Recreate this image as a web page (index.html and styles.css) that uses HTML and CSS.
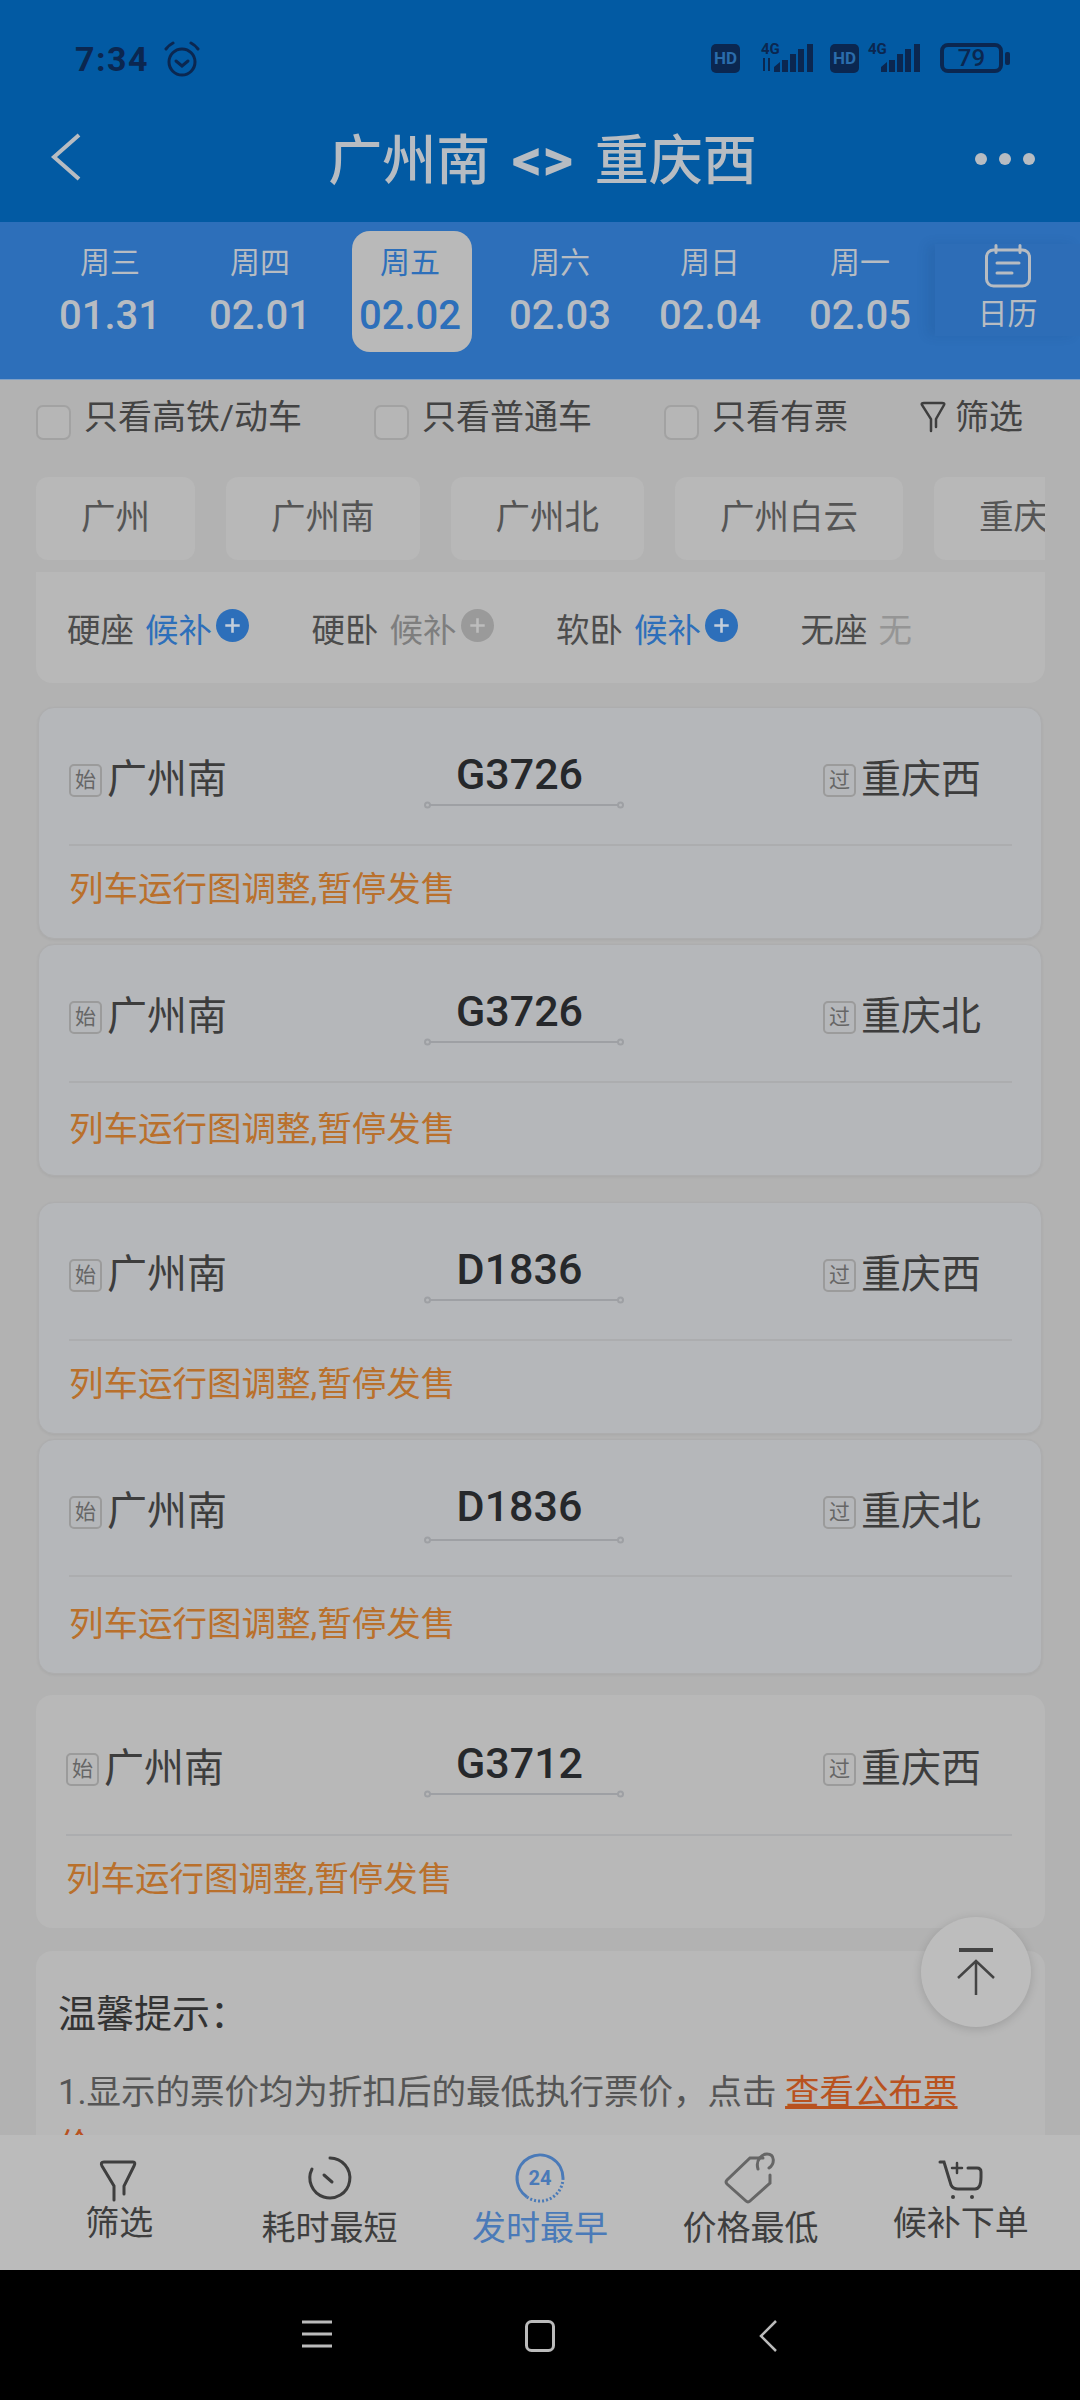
FILE: index.html
```html
<!DOCTYPE html>
<html lang="zh-CN">
<head>
    <meta charset="UTF-8">
    <meta name="viewport" content="width=device-width, initial-scale=1.0">
    <title>广州南 - 重庆西</title>
    <link rel="stylesheet" href="styles.css">
</head>
<body>
<div class="page">
    <header class="header">
        <div class="status">
            <span class="status-time">7:34</span>
            <svg class="status-alarm" width="38" height="36" viewBox="0 0 38 36" fill="none" stroke="#0b2750" stroke-width="3" stroke-linecap="round">
                <circle cx="19" cy="21" r="13"/>
                <path d="M13 20l6 5 6-5"/>
                <path d="M3 8q3-4 7-6M35 8q-3-4-7-6"/>
            </svg>
            <div class="status-right">
                <span class="hd">HD</span>
                <svg class="sig" width="60" height="32" viewBox="0 0 60 32" fill="#0b2750">
                    <text x="5" y="12" font-family="Roboto" font-size="15" font-weight="700">4G</text>
                    <path d="M7 16h2v13H7zM12 16h2v13h-2z"/>
                    <path d="M18 25l6-5v10h-6zM26 18h6v12h-6zM34 12h6v18h-6zM42 7h6v23h-6zM51 2h6v28h-6z"/>
                </svg>
                <span class="hd hd-second">HD</span>
                <svg class="sig sig-second" width="60" height="32" viewBox="0 0 60 32" fill="#0b2750">
                    <text x="3" y="12" font-family="Roboto" font-size="15" font-weight="700">4G</text>
                    <path d="M16 25l6-5v10h-6zM24 18h6v12h-6zM32 12h6v18h-6zM40 7h6v23h-6zM49 2h6v28h-6z"/>
                </svg>
                <span class="battery">79</span>
                <span class="battery-nub"></span>
            </div>
        </div>
        <div class="titlebar">
            <svg class="back" width="32" height="48" viewBox="0 0 32 48" fill="none" stroke="#b7bcc2" stroke-width="4">
                <path d="M29 2L4 24l25 22"/>
            </svg>
            <h1 class="title">广州南 <b>&lt;&gt;</b> 重庆西</h1>
            <div class="dots"><i></i><i></i><i></i></div>
        </div>
    </header>

    <nav class="dates">
        <div class="day"><span class="day-week">周三</span><span class="day-date">01.31</span></div>
        <div class="day"><span class="day-week">周四</span><span class="day-date">02.01</span></div>
        <div class="day day-active"><span class="day-week">周五</span><span class="day-date">02.02</span></div>
        <div class="day"><span class="day-week">周六</span><span class="day-date">02.03</span></div>
        <div class="day"><span class="day-week">周日</span><span class="day-date">02.04</span></div>
        <div class="day"><span class="day-week">周一</span><span class="day-date">02.05</span></div>
        <div class="calendar">
            <svg width="46" height="44" viewBox="0 0 46 44" fill="none" stroke="#b7bcc2" stroke-width="3" stroke-linecap="round">
                <rect x="1.500" y="6" width="43" height="36" rx="7"/>
                <path d="M11 1.500v7M35 1.500v7M12 19h22M12 29h15"/>
            </svg>
            <span>日历</span>
        </div>
    </nav>

    <main class="content">
        <div class="filters">
            <label class="check"><i class="box"></i>只看高铁/动车</label>
            <label class="check"><i class="box"></i>只看普通车</label>
            <label class="check"><i class="box"></i>只看有票</label>
            <div class="filter-link">
                <svg width="26" height="32" viewBox="0 0 26 32" fill="none" stroke="#3e3e3e" stroke-width="2.500" stroke-linecap="round">
                    <path d="M11 30V18L2 4q-1-2 2-2h18q3 0 2 2l-8 14v8"/>
                </svg>
                筛选
            </div>
        </div>

        <div class="chips">
            <span class="chip">广州</span>
            <span class="chip">广州南</span>
            <span class="chip">广州北</span>
            <span class="chip">广州白云</span>
            <span class="chip">重庆</span>
        </div>

        <div class="seats">
            <div class="seat">硬座<span class="seat-state blue">候补</span>
                <svg class="plus" width="33" height="33" viewBox="0 0 32 32"><circle cx="16" cy="16" r="16" fill="#2d6fba"/><path d="M16 9v14M9 16h14" stroke="#c3cedb" stroke-width="2.500"/></svg>
            </div>
            <div class="seat">硬卧<span class="seat-state">候补</span>
                <svg class="plus" width="33" height="33" viewBox="0 0 32 32"><circle cx="16" cy="16" r="16" fill="#9a9a9a"/><path d="M16 9v14M9 16h14" stroke="#bdbdbd" stroke-width="2.500"/></svg>
            </div>
            <div class="seat">软卧<span class="seat-state blue">候补</span>
                <svg class="plus" width="33" height="33" viewBox="0 0 32 32"><circle cx="16" cy="16" r="16" fill="#2d6fba"/><path d="M16 9v14M9 16h14" stroke="#c3cedb" stroke-width="2.500"/></svg>
            </div>
            <div class="seat">无座<span class="seat-state pale">无</span></div>
        </div>

        <section class="card">
            <div class="card-row">
                <div class="from"><span class="tag">始</span>广州南</div>
                <div class="train">G3726
                    <svg width="200" height="10" viewBox="0 0 200 10" fill="none" stroke="#9ea0a4" stroke-width="2"><path d="M5 5h190"/><circle cx="3.500" cy="5" r="2.500"/><circle cx="196.500" cy="5" r="2.500"/></svg>
                </div>
                <div class="to"><span class="tag">过</span>重庆西</div>
            </div>
            <p class="note">列车运行图调整,暂停发售</p>
        </section>
        <section class="card card-tight">
            <div class="card-row">
                <div class="from"><span class="tag">始</span>广州南</div>
                <div class="train">G3726
                    <svg width="200" height="10" viewBox="0 0 200 10" fill="none" stroke="#9ea0a4" stroke-width="2"><path d="M5 5h190"/><circle cx="3.500" cy="5" r="2.500"/><circle cx="196.500" cy="5" r="2.500"/></svg>
                </div>
                <div class="to"><span class="tag">过</span>重庆北</div>
            </div>
            <p class="note">列车运行图调整,暂停发售</p>
        </section>
        <section class="card card-third">
            <div class="card-row">
                <div class="from"><span class="tag">始</span>广州南</div>
                <div class="train">D1836
                    <svg width="200" height="10" viewBox="0 0 200 10" fill="none" stroke="#9ea0a4" stroke-width="2"><path d="M5 5h190"/><circle cx="3.500" cy="5" r="2.500"/><circle cx="196.500" cy="5" r="2.500"/></svg>
                </div>
                <div class="to"><span class="tag">过</span>重庆西</div>
            </div>
            <p class="note">列车运行图调整,暂停发售</p>
        </section>
        <section class="card card-tight card-tall">
            <div class="card-row">
                <div class="from"><span class="tag">始</span>广州南</div>
                <div class="train">D1836
                    <svg width="200" height="10" viewBox="0 0 200 10" fill="none" stroke="#9ea0a4" stroke-width="2"><path d="M5 5h190"/><circle cx="3.500" cy="5" r="2.500"/><circle cx="196.500" cy="5" r="2.500"/></svg>
                </div>
                <div class="to"><span class="tag">过</span>重庆北</div>
            </div>
            <p class="note">列车运行图调整,暂停发售</p>
        </section>
        <section class="card card-wide">
            <div class="card-row">
                <div class="from"><span class="tag">始</span>广州南</div>
                <div class="train">G3712
                    <svg width="200" height="10" viewBox="0 0 200 10" fill="none" stroke="#9ea0a4" stroke-width="2"><path d="M5 5h190"/><circle cx="3.500" cy="5" r="2.500"/><circle cx="196.500" cy="5" r="2.500"/></svg>
                </div>
                <div class="to"><span class="tag">过</span>重庆西</div>
            </div>
            <p class="note">列车运行图调整,暂停发售</p>
        </section>

        <section class="tips">
            <h2>温馨提示：</h2>
            <p>1.显示的票价均为折扣后的最低执行票价，点击 <a>查看公布票价</a></p>
        </section>

        <button class="to-top" type="button">
            <svg width="38" height="48" viewBox="0 0 38 48" fill="none" stroke="#444" stroke-width="2.500">
                <path d="M2 2h34" stroke-width="4"/>
                <path d="M19 47V13M1 30l18-17 18 17"/>
            </svg>
        </button>
    </main>

    <footer class="tabs">
        <div class="tab tab-up">
            <svg width="50" height="50" viewBox="0 0 50 50" fill="none" stroke="#3e3e3e" stroke-width="3" stroke-linecap="round">
                <path d="M20 47V33L8 13q-2-4 2-4h29q3 0 1 4L30 33v8"/>
            </svg>
            <span>筛选</span>
        </div>
        <div class="tab">
            <svg width="50" height="50" viewBox="0 0 50 50" fill="none" stroke="#3e3e3e" stroke-width="3" stroke-linecap="round">
                <path d="M7 16A20 20 0 1 0 25 5"/>
                <path d="M19 22l8 7"/>
            </svg>
            <span>耗时最短</span>
        </div>
        <div class="tab tab-active">
            <svg width="50" height="50" viewBox="0 0 50 50" fill="none" stroke="#4a7ab8" stroke-width="3">
                <path d="M12 44A23 23 0 1 1 48 25"/>
                <path d="M48 25A23 23 0 0 1 12 44" stroke-dasharray="2 2"/>
                <text x="25" y="32" text-anchor="middle" font-family="Roboto" font-size="20" font-weight="700" fill="#4a7ab8" stroke="none">24</text>
            </svg>
            <span>发时最早</span>
        </div>
        <div class="tab">
            <svg width="50" height="50" viewBox="0 0 50 50" fill="none" stroke="#666" stroke-width="3" stroke-linecap="round">
                <path d="M38 5H25L2 27q-2 2 0 4l19 17q2 2 4 0l20-18v-8"/>
                <path d="M33 16C30 6 38 1 42 1c8 0 8 10 2 14"/>
            </svg>
            <span>价格最低</span>
        </div>
        <div class="tab tab-up">
            <svg width="50" height="50" viewBox="0 0 50 50" fill="none" stroke="#3e3e3e" stroke-width="3" stroke-linecap="round">
                <path d="M4 9h4l7 23q2 4 7 4h17q6 0 6-12v-5q0-4-4-4h-9"/>
                <path d="M21 10v10M16 15h10" stroke-width="2.500"/>
                <circle cx="17" cy="44" r="2" fill="#3e3e3e" stroke="none"/>
                <circle cx="36" cy="44" r="2" fill="#3e3e3e" stroke="none"/>
            </svg>
            <span>候补下单</span>
        </div>
    </footer>

    <div class="sysnav">
        <svg width="30" height="28" viewBox="0 0 30 28" fill="none" stroke="#bbb" stroke-width="3">
            <path d="M0 2h30M0 14h30M0 26h30"/>
        </svg>
        <svg class="sysnav-home" width="30" height="32" viewBox="0 0 30 32" fill="none" stroke="#bbb" stroke-width="3">
            <rect x="1.500" y="1.500" width="27" height="29" rx="5"/>
        </svg>
        <svg width="20" height="32" viewBox="0 0 20 32" fill="none" stroke="#bbb" stroke-width="2.500">
            <path d="M18 1L3 16l15 15"/>
        </svg>
    </div>
</div>
</body>
</html>
```

FILE: styles.css
```css
* {
    box-sizing: border-box;
}

body {
    margin: 0;
    font-family: Roboto, "Noto Sans CJK SC", sans-serif;
    color: #4a4a4a;
}

.page {
    width: 1080px;
    height: 2400px;
    display: flex;
    flex-direction: column;
    overflow: hidden;
    background-color: #b2b2b2;
}

/* top blue header */
.header {
    height: 222px;
    background-color: #025aa3;
}

.status {
    height: 96px;
    padding: 43px 70px 0 75px;
    display: flex;
    align-items: flex-start;
}

.status-time {
    font-size: 34px;
    line-height: 32px;
    font-weight: 700;
    letter-spacing: 1.500px;
    color: #0b2750;
}

.status-alarm {
    margin: -2px 0 0 14px;
}

.status-right {
    margin-left: auto;
    display: flex;
    align-items: center;
    height: 30px;
}

.hd {
    width: 29px;
    height: 29px;
    border-radius: 5px;
    background-color: #0b2750;
    color: #2a6cab;
    font-size: 17px;
    font-weight: 700;
    line-height: 29px;
    text-align: center;
}

.sig {
    margin-left: 16px;
    overflow: visible;
}

.hd-second {
    margin-left: 14px;
}

.sig-second {
    margin-left: 6px;
}

.battery {
    margin-left: 15px;
    width: 63px;
    height: 30px;
    border: 4px solid #0b2750;
    border-radius: 8px;
    color: #0b2750;
    font-size: 24px;
    font-weight: 500;
    line-height: 22px;
    text-align: center;
}

.battery-nub {
    margin-left: 2px;
    width: 5px;
    height: 13px;
    border-radius: 2px;
    background-color: #0b2750;
}

.titlebar {
    height: 126px;
    padding: 0 45px 0 50px;
    display: grid;
    grid-template-columns: 1fr auto 1fr;
    align-items: center;
}

.back {
    margin-bottom: 5px;
}

.title {
    margin: 0 0 6px;
    font-size: 54px;
    font-weight: 500;
    word-spacing: 8px;
    color: #b7bcc2;
}

.title b {
    font-size: 60px;
    font-weight: 700;
    line-height: 1;
}

.dots {
    display: flex;
    justify-content: flex-end;
    gap: 12px;
}

.dots i {
    width: 12px;
    height: 12px;
    border-radius: 50%;
    background-color: #b7bcc2;
}

/* date strip */
.dates {
    height: 158px;
    padding-left: 35px;
    display: flex;
    background-color: #2d6fba;
    border-bottom: 1px solid #7fa0c6;
}

.day {
    width: 120px;
    height: 121px;
    margin: 9px 15px 0;
    padding-top: 12px;
    display: flex;
    flex-direction: column;
    align-items: center;
    border-radius: 18px;
    color: #b7bcc2;
}

.day-week {
    font-size: 30px;
    line-height: 40px;
}

.day-date {
    margin-top: 8px;
    font-size: 40px;
    font-weight: 500;
    line-height: 50px;
}

.day-active {
    margin: 9px 13px 0 17px;
    padding-right: 4px;
    background-color: #b9b9b9;
    color: #2d6fba;
}

.calendar {
    flex: 1;
    height: 92px;
    margin-top: 22px;
    display: flex;
    flex-direction: column;
    align-items: center;
    background-color: #2d6db7;
    box-shadow: -8px 0 10px rgba(20, 60, 110, 0.12);
    color: #b7bcc2;
    font-size: 30px;
    line-height: 40px;
}

.calendar svg {
    display: block;
    margin-bottom: 6px;
}

/* list area */
.content {
    flex: 1;
    position: relative;
    overflow: hidden;
    min-height: 0;
}

.filters {
    height: 97px;
    padding: 13px 0 0 36px;
    display: flex;
    align-items: flex-start;
    gap: 72px;
    font-size: 34px;
    line-height: 48px;
    color: #434343;
}

.check {
    display: flex;
    align-items: flex-start;
}

.box {
    width: 35px;
    height: 35px;
    margin: 12px 13px 0 0;
    border: 2px solid #a2a2a2;
    border-radius: 7px;
    background-color: #b6b6b6;
}

.filter-link {
    display: flex;
    align-items: center;
    gap: 9px;
}

.chips {
    height: 83px;
    margin: 0 35px 0 36px;
    display: flex;
    gap: 31px;
    overflow: hidden;
    font-size: 34.500px;
    color: #555;
}

.chip {
    flex: none;
    padding: 0 45px;
    height: 83px;
    line-height: 80px;
    border-radius: 12px;
    background-color: #b8b8b8;
}

.seats {
    height: 111px;
    margin: 12px 35px 0 36px;
    padding-left: 31px;
    display: flex;
    align-items: center;
    border-radius: 0 0 16px 16px;
    background-color: #b8b8b8;
    font-size: 33.500px;
}

.seat {
    width: 244.500px;
    display: flex;
    align-items: center;
    color: #4c4c4c;
}

.seat-state {
    margin-left: 11px;
    color: #7e7e7e;
}

.seat-state.blue {
    color: #2d6fba;
}

.seat-state.pale {
    color: #959595;
}

.plus {
    margin: -5px 0 0 4px;
}

.card {
    width: 1004px;
    height: 232px;
    margin: 24px 0 0 38px;
    padding: 0 29px 0 30px;
    border: 1px solid #adadae;
    border-radius: 16px;
    background-color: #b5b7ba;
    box-shadow: 0 1px 3px rgba(0, 0, 0, 0.06);
}

.card-tight {
    margin-top: 5px;
}

.card-third {
    margin-top: 26px;
}

.card-tall {
    height: 235px;
}

.card-wide {
    width: 1009px;
    height: 233px;
    margin: 21px 0 0 36px;
    padding: 0 33px 0 30px;
    border: none;
    box-shadow: none;
    background-color: #b8b8b8;
}

.card-row {
    height: 138px;
    display: flex;
    align-items: flex-start;
    padding-top: 50px;
    border-bottom: 2px solid #acadaf;
    font-size: 40px;
    line-height: 44px;
    color: #3d3d3d;
}

.card-tall .card-row {
    height: 137px;
}

.card-wide .card-row {
    height: 141px;
    padding-top: 52px;
}

.from,
.to {
    display: flex;
    align-items: center;
}

.from {
    width: 355px;
}

.card-wide .from {
    width: 358px;
}

.to {
    margin: 0 31px 0 auto;
}

.tag {
    width: 33px;
    height: 33px;
    margin-right: 5px;
    border: 2px solid #9b9b9b;
    border-radius: 5px;
    font-size: 21px;
    line-height: 29px;
    text-align: center;
    color: #666;
}

.train {
    width: 200px;
    margin-top: -6px;
    text-align: center;
    text-indent: -9px;
    font-size: 43px;
    font-weight: 500;
    color: #26282b;
}

.train svg {
    display: block;
    margin-top: 4px;
}

.card-tall .train svg {
    margin-top: 7px;
}

.note {
    margin: 0;
    height: 86px;
    line-height: 86px;
    font-size: 34.500px;
    color: #b9702c;
}

.card-tight .note {
    margin-top: 3px;
}

.card-tall .note {
    margin-top: 4px;
}

.tips {
    width: 1009px;
    height: 300px;
    margin: 23px 0 0 36px;
    padding: 37px 70px 0 22px;
    border-radius: 16px 16px 0 0;
    background-color: #b8b8b8;
}

.tips h2 {
    margin: 0 0 25px;
    font-size: 38px;
    font-weight: 400;
    line-height: 52px;
    color: #333;
}

.tips p {
    margin: 0;
    font-size: 34.500px;
    line-height: 54px;
    color: #555;
}

.tips a {
    color: #b8521f;
    text-decoration: underline;
}

.to-top {
    position: absolute;
    left: 921px;
    top: 1537px;
    width: 110px;
    height: 110px;
    padding: 0;
    border: none;
    border-radius: 50%;
    display: flex;
    align-items: center;
    justify-content: center;
    background-color: #bdbdbd;
    box-shadow: 0 2px 10px rgba(0, 0, 0, 0.15);
}

/* bottom sort bar */
.tabs {
    height: 135px;
    padding: 18px 14px 0;
    display: grid;
    grid-template-columns: repeat(5, 1fr);
    background-color: #bbb;
}

.tab {
    display: flex;
    flex-direction: column;
    align-items: center;
    font-size: 34px;
    line-height: 40px;
    color: #3e3e3e;
}

.tab svg {
    display: block;
    overflow: visible;
}

.tab span {
    margin-top: 5px;
}

.tab-up span {
    margin-top: 0;
}

.tab-active {
    color: #4a7ab8;
}

.sysnav {
    height: 130px;
    padding: 50px 0 0 302px;
    display: flex;
    align-items: flex-start;
    background-color: #000;
}

.sysnav-home {
    margin: 0 203px 0 193px;
}
```
